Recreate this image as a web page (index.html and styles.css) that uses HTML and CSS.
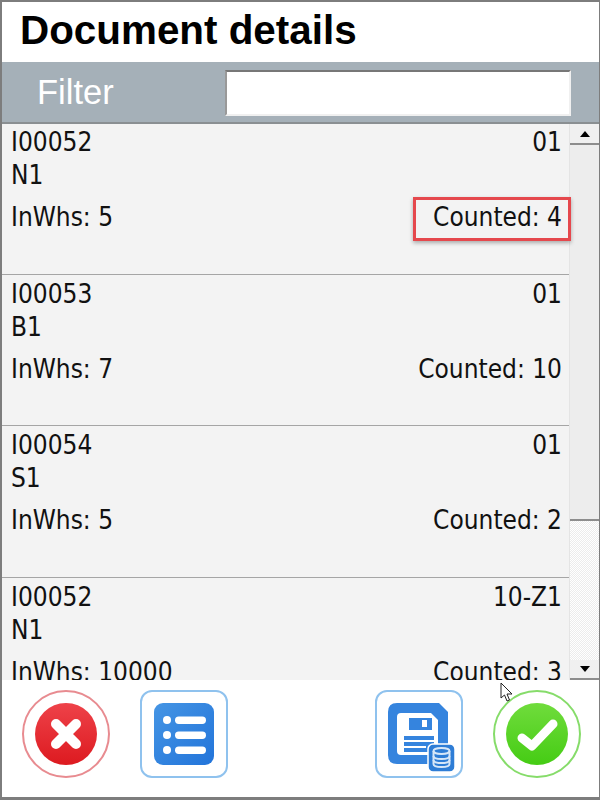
FILE: index.html
```html
<!DOCTYPE html>
<html lang="en">

<head>
    <meta charset="UTF-8">
    <meta name="viewport" content="width=device-width, initial-scale=1.0">
    <link rel="stylesheet" href="styles.css">
</head>

<body>
    <div class="screen">
        <h1 class="title">Document details</h1>
        <div class="filter-bar">
            <label class="filter-label">Filter</label>
            <input type="text" class="filter-input">
        </div>

        <div class="list-area">
            <div class="list">
                <div class="row">
                    <div class="line"><span>I00052</span><span>01</span></div>
                    <div class="line"><span>N1</span></div>
                    <div class="line stock"><span>InWhs: 5</span><span>Counted: 4</span></div>
                    <div class="highlight"></div>
                </div>
                <div class="row">
                    <div class="line"><span>I00053</span><span>01</span></div>
                    <div class="line"><span>B1</span></div>
                    <div class="line stock"><span>InWhs: 7</span><span>Counted: 10</span></div>
                </div>
                <div class="row">
                    <div class="line"><span>I00054</span><span>01</span></div>
                    <div class="line"><span>S1</span></div>
                    <div class="line stock"><span>InWhs: 5</span><span>Counted: 2</span></div>
                </div>
                <div class="row">
                    <div class="line"><span>I00052</span><span>10-Z1</span></div>
                    <div class="line"><span>N1</span></div>
                    <div class="line stock"><span>InWhs: 10000</span><span>Counted: 3</span></div>
                </div>
            </div>
            <div class="scrollbar">
                <div class="scroll-btn"><span class="arrow-up"></span></div>
                <div class="scroll-thumb"></div>
                <div class="scroll-track"></div>
                <div class="scroll-btn bottom"><span class="arrow-down"></span></div>
            </div>
        </div>

        <div class="toolbar">
            <button class="tool round red">
                <svg width="74" height="74" viewBox="0 0 74 74">
                    <defs>
                        <linearGradient id="redFill" x1="0" y1="0" x2="0" y2="1">
                            <stop offset="0" stop-color="#ee4249" />
                            <stop offset="1" stop-color="#dd1a20" />
                        </linearGradient>
                    </defs>
                    <circle cx="37" cy="37" r="31" fill="url(#redFill)" />
                    <path d="M27 27 L47 47 M47 27 L27 47" stroke="#fff" stroke-width="10" stroke-linecap="round" />
                </svg>
            </button>
            <button class="tool square">
                <svg width="60" height="62" viewBox="0 0 60 62">
                    <defs>
                        <linearGradient id="blueFill" x1="0" y1="0" x2="1" y2="1">
                            <stop offset="0" stop-color="#4595e4" />
                            <stop offset="1" stop-color="#2274da" />
                        </linearGradient>
                    </defs>
                    <rect width="60" height="62" rx="9" fill="url(#blueFill)" />
                    <g fill="#fff">
                        <circle cx="13" cy="17" r="4" />
                        <circle cx="13" cy="32" r="4" />
                        <circle cx="13" cy="47" r="4" />
                        <rect x="21" y="13.500" width="31" height="7.500" rx="3.700" />
                        <rect x="21" y="28.500" width="31" height="7.500" rx="3.700" />
                        <rect x="21" y="43.500" width="31" height="7.500" rx="3.700" />
                    </g>
                </svg>
            </button>
            <div class="spacer"></div>
            <button class="tool square">
                <svg width="84" height="84" viewBox="0 0 84 84">
                    <path d="M20 11 H62 L71 20 V63 Q71 72 62 72 H20 Q11 72 11 63 V20 Q11 11 20 11 Z" fill="#3584de" />
                    <path d="M24 21 H54 L61 28 V63 H24 Q20 63 20 59 V25 Q20 21 24 21 Z" fill="#fff" />
                    <rect x="32" y="26" width="23" height="12" fill="#3584de" />
                    <rect x="45" y="28" width="5" height="7" fill="#fff" />
                    <rect x="27" y="44" width="30" height="16" fill="#3584de" />
                    <rect x="27" y="48" width="30" height="2" fill="#fff" />
                    <rect x="27" y="54" width="22" height="2" fill="#fff" />
                    <rect x="51" y="52" width="27" height="28" rx="5" fill="#2e7dd6" stroke="#fff" stroke-width="1.500" />
                    <g fill="none" stroke="#d7e7f8" stroke-width="2">
                        <ellipse cx="64.500" cy="59" rx="8" ry="3" />
                        <path d="M56.500 59 V72 C56.500 76 72.500 76 72.500 72 V59" />
                        <path d="M56.500 64 C56.500 68 72.500 68 72.500 64" />
                        <path d="M56.500 68 C56.500 72 72.500 72 72.500 68" />
                    </g>
                </svg>
            </button>
            <button class="tool round green">
                <svg width="74" height="74" viewBox="0 0 74 74">
                    <defs>
                        <linearGradient id="greenFill" x1="0" y1="0" x2="0" y2="1">
                            <stop offset="0" stop-color="#70dc3c" />
                            <stop offset="1" stop-color="#45cc14" />
                        </linearGradient>
                    </defs>
                    <circle cx="37" cy="37" r="31" fill="url(#greenFill)" />
                    <path d="M22 41 L32 49 L53 27" fill="none" stroke="#fff" stroke-width="9" stroke-linecap="round" stroke-linejoin="round" />
                </svg>
            </button>
        </div>

        <svg class="cursor" width="13" height="21" viewBox="0 0 13 21">
            <path d="M1 1 V16 L4.500 13 L7 19 L9.500 18 L7 12 H12 Z" fill="#fff" stroke="#222" stroke-width="1" />
        </svg>
    </div>
</body>

</html>
```

FILE: styles.css
```css
* {
    margin: 0;
    padding: 0;
    box-sizing: border-box;
}

body {
    width: 600px;
    height: 800px;
    overflow: hidden;
    background: #fff;
    font-family: "DejaVu Sans", sans-serif;
}

.screen {
    position: relative;
    display: flex;
    flex-direction: column;
    width: 600px;
    height: 800px;
    border: 2px solid #7d7d7d;
    border-bottom-width: 3px;
    border-right-width: 1px;
}

.title {
    height: 60px;
    padding: 7px 0 0 18px;
    font-family: "Liberation Sans", Arial, sans-serif;
    font-size: 40.400px;
    line-height: 42px;
    font-weight: bold;
    color: #000;
}

.filter-bar {
    display: flex;
    align-items: center;
    flex-shrink: 0;
    height: 62px;
    padding-left: 35px;
    background: #a5b0b8;
    border-bottom: 2px solid #8a8f92;
}

.filter-label {
    width: 188px;
    font-family: "Liberation Sans", Arial, sans-serif;
    font-size: 34.500px;
    color: #fff;
}

.filter-input {
    width: 346px;
    height: 46px;
    margin-top: 2px;
    background: #fff;
    border: 2px solid #f0f0f0;
    border-top-color: #777;
    border-left-color: #999;
}

.list-area {
    display: flex;
    flex-shrink: 0;
    height: 556px;
    overflow: hidden;
    background: #f3f3f3;
}

.list {
    width: 567px;
    flex-shrink: 0;
    margin-top: -1px;
}

.row {
    position: relative;
    height: 151.500px;
    padding: 3px 7px 0 9px;
    border-bottom: 1px solid #a5a5a5;
    font-size: 26px;
    font-stretch: condensed;
    color: #111;
}

.line {
    display: flex;
    justify-content: space-between;
    height: 33px;
    line-height: 33px;
}

.stock {
    margin-top: 9px;
}

.highlight {
    position: absolute;
    left: 411px;
    top: 74px;
    width: 158px;
    height: 44px;
    border: 3px solid #e5484d;
    box-shadow: 0 2px 4px rgba(0, 0, 0, 0.3);
}

.scrollbar {
    display: flex;
    flex-direction: column;
    flex: 1;
    border-left: 1px solid #e4e4e4;
}

.scroll-btn {
    display: flex;
    align-items: center;
    justify-content: center;
    height: 21px;
    background: #f0f0f0;
    border-bottom: 2px solid #8d8d8d;
}

.scroll-btn.bottom {
    height: 20px;
    border-bottom: 2px solid #8d8d8d;
}

.scroll-thumb {
    height: 376px;
    background: #ededed;
    border-bottom: 2px solid #8d8d8d;
}

.scroll-track {
    flex: 1;
    background: repeating-conic-gradient(#fff 0 25%, #ececec 0 50%) 0 0 / 2px 2px;
}

.arrow-up {
    border: 5px solid transparent;
    border-top: 0;
    border-bottom: 6px solid #000;
}

.arrow-down {
    border: 5px solid transparent;
    border-bottom: 0;
    border-top: 6px solid #000;
}

.toolbar {
    display: flex;
    align-items: flex-start;
    gap: 30px;
    flex: 1;
    padding: 10px 18px 0 20px;
    background: #fff;
}

.tool {
    display: flex;
    align-items: center;
    justify-content: center;
    flex-shrink: 0;
    width: 88px;
    height: 88px;
    background: #fff;
}

.round {
    border-radius: 50%;
}

.red {
    border: 2px solid #e88b90;
}

.green {
    border: 2px solid #86dc6a;
}

.square {
    border: 2px solid #8fc2ee;
    border-radius: 12px;
}

.spacer {
    flex: 1;
}

.cursor {
    position: absolute;
    left: 498px;
    top: 680px;
}
```
